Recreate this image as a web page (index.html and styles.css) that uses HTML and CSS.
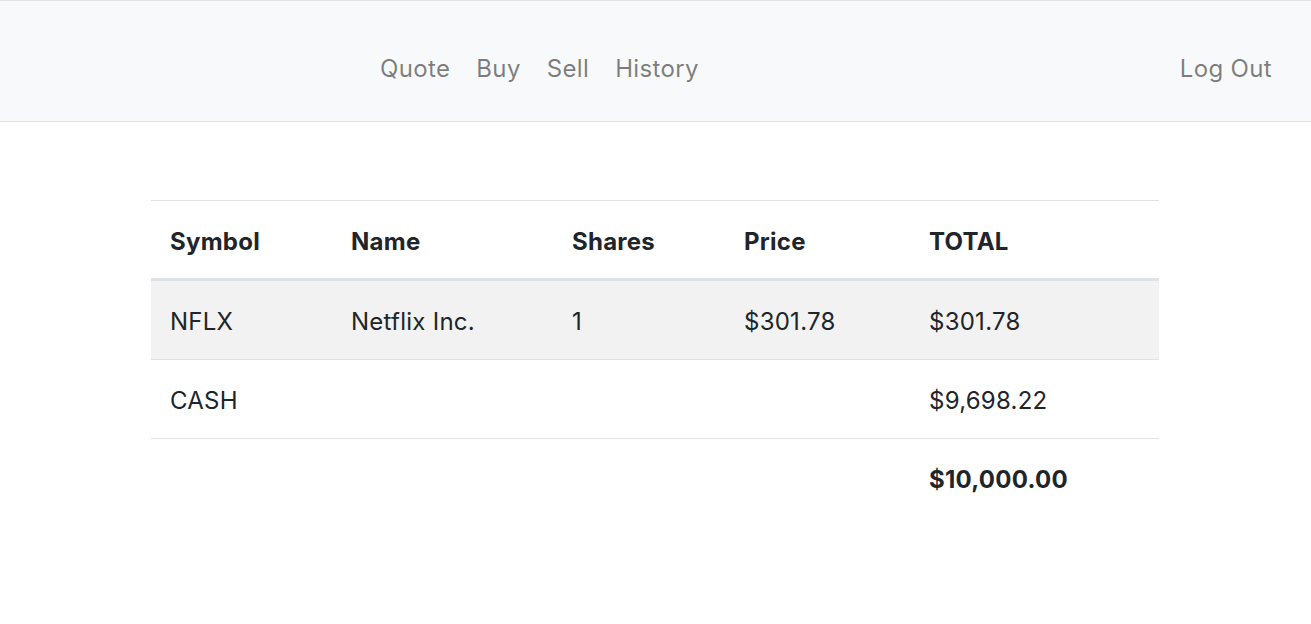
FILE: index.html
```html
<!DOCTYPE html>
<html lang="en">
<head>
<meta charset="utf-8">
<title>C$50 Finance: Portfolio</title>
<link rel="stylesheet" href="styles.css">
</head>
<body>
<nav class="navbar">
  <ul class="nav-links">
    <li><a href="#">Quote</a></li>
    <li><a href="#">Buy</a></li>
    <li><a href="#">Sell</a></li>
    <li><a href="#">History</a></li>
  </ul>
  <ul class="nav-right">
    <li><a href="#">Log Out</a></li>
  </ul>
</nav>
<main class="container">
  <table class="portfolio">
    <thead>
      <tr><th class="c1">Symbol</th><th class="c2">Name</th><th class="c3">Shares</th><th class="c4">Price</th><th class="c5">TOTAL</th></tr>
    </thead>
    <tbody>
      <tr class="striped"><td>NFLX</td><td>Netflix Inc.</td><td>1</td><td>$301.78</td><td>$301.78</td></tr>
      <tr><td>CASH</td><td></td><td></td><td></td><td>$9,698.22</td></tr>
    </tbody>
    <tfoot>
      <tr><td></td><td></td><td></td><td></td><td class="grand">$10,000.00</td></tr>
    </tfoot>
  </table>
</main>
</body>
</html>
```

FILE: styles.css
```css
* { box-sizing: border-box; }
html, body {
  margin: 0;
  padding: 0;
  background: #fff;
  font-family: Inter, "Open Sans", "Liberation Sans", sans-serif;
  color: #212529;
}
.navbar {
  display: flex;
  align-items: center;
  justify-content: space-between;
  height: 122px;
  background: #f8f9fa;
  border-top: 1px solid #dee2e6;
  border-bottom: 1px solid #dee2e6;
  padding: 16px 26px 0 0;
}
.navbar ul {
  list-style: none;
  margin: 0;
  padding: 0;
  display: flex;
}
.navbar .nav-links { margin-left: 367px; }
.navbar a {
  display: block;
  padding: 0 13px;
  font-size: 24px;
  line-height: 36px;
  letter-spacing: 0.35px;
  color: rgba(0, 0, 0, 0.5);
  text-decoration: none;
}
.container {
  padding: 78px 0 0 151px;
}
.portfolio {
  width: 1008px;
  border-collapse: collapse;
  font-size: 24px;
  line-height: 36px;
  letter-spacing: 0.25px;
}
.portfolio th, .portfolio td {
  text-align: left;
  padding: 23px 19px 19px;
  vertical-align: top;
}
.portfolio thead th {
  font-weight: 700;
  border-top: 1px solid #dee2e6;
  border-bottom: 3px solid #dee2e6;
  padding-bottom: 18px;
}
.portfolio tbody td { border-bottom: 1px solid #dee2e6; }
.portfolio tbody tr.striped { background: #f2f2f2; }
.c1 { width: 181px; }
.c2 { width: 221px; }
.c3 { width: 172px; }
.c4 { width: 185px; }
.grand { font-weight: 700; }
```
